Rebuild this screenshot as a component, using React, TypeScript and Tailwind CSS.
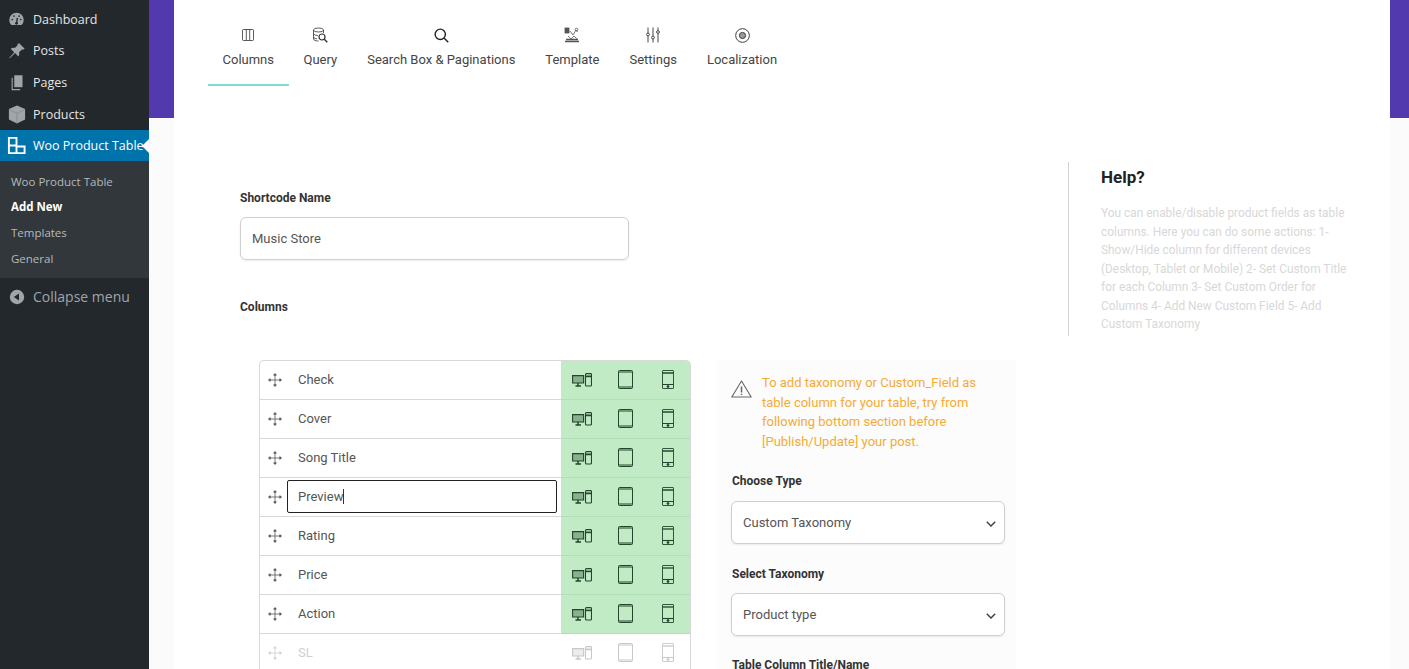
import type { ReactNode } from 'react';

const rows = ['Check', 'Cover', 'Song Title', 'Preview', 'Rating', 'Price', 'Action'];

function DashIcon() {
  return (
    <svg viewBox="0 0 20 20" className="h-[17px] w-[17px] text-[#a0a5aa]" fill="currentColor">
      <path d="M10 2a8.500 8.500 0 0 0-8.500 8.500c0 2.400 1 4.500 2.600 6h11.800a8.500 8.500 0 0 0 2.600-6A8.500 8.500 0 0 0 10 2z" />
      <path d="M10 15l1-7" stroke="#23282d" strokeWidth="1.600" />
      <circle cx="10" cy="14.500" r="1.700" fill="#23282d" />
      <circle cx="5" cy="10" r="1" fill="#23282d" />
      <circle cx="15" cy="10" r="1" fill="#23282d" />
      <circle cx="7" cy="6" r="1" fill="#23282d" />
      <circle cx="13" cy="6" r="1" fill="#23282d" />
    </svg>
  );
}

function PinIcon() {
  return (
    <svg viewBox="0 0 20 20" className="h-[18px] w-[18px] text-[#a0a5aa]" fill="currentColor">
      <path d="M12.500 1.500l6 6-1.600 1.200-1-.6-3.600 3.400c.6 1.700.2 3.300-.8 4.500L7.800 12.300 2 18l-.5-.5 5.400-6-3.900-3.900c1.200-1 2.800-1.400 4.500-.8l3.400-3.600-.6-1z" />
    </svg>
  );
}

function PagesIcon() {
  return (
    <svg viewBox="0 0 20 20" className="h-[17px] w-[15px] text-[#a0a5aa]" fill="currentColor" preserveAspectRatio="none">
      <path d="M7 1.500h11v14H7z" />
      <path d="M5 4.500v13h10v1.500H3.500V4.500z" />
    </svg>
  );
}

function BoxIcon() {
  return (
    <svg viewBox="0 0 20 20" className="h-[19px] w-[18px] text-[#a0a5aa]" preserveAspectRatio="none">
      <path d="M10 .5l9 3.800v11L10 19.500 1 15.300v-11z" fill="currentColor" />
      <path d="M1.500 5L10 8.700 18.500 5M10 8.700v10.500" fill="none" stroke="#7d8287" strokeWidth="0.700" />
    </svg>
  );
}

function WooIcon() {
  return (
    <svg viewBox="0 0 20 20" className="h-[19px] w-[19px] text-white" fill="none" stroke="currentColor" strokeWidth="2">
      <path d="M2 2h8v16H2zM2 10h8M10 11h8.500v7H10" />
    </svg>
  );
}

function CollapseIcon() {
  return (
    <svg viewBox="0 0 20 20" className="h-[16px] w-[16px] text-[#a0a5aa]" fill="currentColor">
      <path fillRule="evenodd" d="M10 1a9 9 0 1 1 0 18 9 9 0 0 1 0-18zm2.500 4.500L6 10l6.500 4.500z" />
    </svg>
  );
}

function MoveIcon() {
  return (
    <svg viewBox="0 0 16 16" className="h-[16px] w-[16px]" fill="none" stroke="currentColor" strokeWidth="0.800">
      <path d="M8 2v12M2 8h12" />
      <path d="M6.700 3.200L8 1.500l1.300 1.700zM6.700 12.800L8 14.500l1.300-1.700zM3.200 6.700L1.500 8l1.700 1.300zM12.800 6.700L14.500 8l-1.700 1.300z" fill="currentColor" />
    </svg>
  );
}

function DesktopMobileIcon() {
  return (
    <svg viewBox="0 0 20 14" className="h-[14px] w-[20px]" fill="none" stroke="currentColor" strokeWidth="1.100">
      <path d="M.6 2.600h11v7.400H.6z" fill="currentColor" fillOpacity="0.350" />
      <path d="M3.500 13h5.500M6 10v2.500" strokeWidth="1.500" />
      <rect x="13.500" y=".6" width="6" height="12.400" rx="1" />
      <path d="M13.500 3.400h6" strokeWidth="1.600" />
    </svg>
  );
}

function TabletIcon() {
  return (
    <svg viewBox="0 0 15 19" className="h-[19px] w-[15px]" fill="none" stroke="currentColor" strokeWidth="1">
      <rect x=".5" y=".5" width="14" height="18" rx="1" />
      <path d="M.5 2h14M.5 17h14" />
    </svg>
  );
}

function PhoneIcon() {
  return (
    <svg viewBox="0 0 12 19" className="h-[19px] w-[12px]" fill="none" stroke="currentColor" strokeWidth="0.900">
      <rect x=".5" y=".5" width="11" height="18" rx=".5" />
      <path d="M.5 3h11" strokeWidth="1.300" />
      <path d="M.5 14.500h11" strokeWidth="1.100" />
      <circle cx="6" cy="16.500" r="1" fill="currentColor" />
    </svg>
  );
}

function ColumnsIcon() {
  return (
    <svg viewBox="0 0 12 12" className="h-[12px] w-[12px]" fill="none" stroke="currentColor" strokeWidth="0.800">
      <rect x=".5" y=".5" width="11" height="11" rx="1" />
      <path d="M4.300 .5v11M7.700 .5v11" />
    </svg>
  );
}

function QueryIcon() {
  return (
    <svg viewBox="0 0 16 16" className="h-[16px] w-[16px]" fill="none" stroke="currentColor" strokeWidth="0.800">
      <ellipse cx="6.500" cy="3" rx="5" ry="2" />
      <path d="M1.500 3v9c0 1 2 2 5 2M11.500 3v3M1.500 6.500c0 1 2 2 4.500 2M1.500 10c0 1 2 1.800 3.500 1.800" />
      <circle cx="10" cy="10" r="3" strokeWidth="1.200" />
      <path d="M12.300 12.300l3 3" strokeWidth="1.400" />
    </svg>
  );
}

function TemplateIcon() {
  return (
    <svg viewBox="0 0 16 16" className="h-[16px] w-[16px] text-[#555]" fill="none" stroke="currentColor" strokeWidth="0.800">
      <rect x="1" y="1" width="4" height="5" fill="currentColor" />
      <path d="M6 4l3 4 3-5 1.500 2M4 9l3 3 3-3 3 3" />
      <circle cx="12.500" cy="2.500" r="1.300" />
      <path d="M1 14.500h14M2 12.500h12" strokeWidth="1.500" />
    </svg>
  );
}

function SlidersIcon() {
  return (
    <svg viewBox="0 0 14 16" className="h-[16px] w-[14px]" fill="none" stroke="currentColor" strokeWidth="0.900">
      <path d="M2 .5v5.500M2 9v6.500M7 .5v8.500M7 12v3.500M12 .5v3M12 6.500v9" />
      <circle cx="2" cy="7.500" r="1.400" />
      <circle cx="7" cy="10.500" r="1.400" />
      <circle cx="12" cy="5" r="1.400" />
    </svg>
  );
}

function TargetIcon() {
  return (
    <svg viewBox="0 0 16 16" className="h-[15px] w-[15px]" fill="none" stroke="currentColor" strokeWidth="1">
      <circle cx="8" cy="8" r="7.300" />
      <circle cx="8" cy="8" r="3.300" fill="currentColor" fillOpacity="0.500" />
    </svg>
  );
}

function SearchIcon() {
  return (
    <svg viewBox="0 0 16 16" className="h-[15px] w-[15px] text-[#222]" fill="none" stroke="currentColor" strokeWidth="1.500">
      <circle cx="6.700" cy="6.700" r="5.500" />
      <path d="M10.700 10.700l4.500 4.500" />
    </svg>
  );
}

function WarnIcon() {
  return (
    <svg viewBox="0 0 21 18" className="h-[18px] w-[21px] text-[#666]" fill="none" stroke="currentColor" strokeWidth="1.100">
      <path d="M10.500 1L.8 17h19.400z" strokeLinejoin="round" />
      <path d="M10.500 6.500v6M10.500 13.800v1.300" strokeWidth="1.500" />
    </svg>
  );
}

function Chevron() {
  return (
    <svg viewBox="0 0 10 6" className="h-[6px] w-[10px] text-[#444]" fill="none" stroke="currentColor" strokeWidth="1.500">
      <path d="M.8 .8L5 5l4.200-4.200" />
    </svg>
  );
}

function MenuItem({ icon, label }: { icon: ReactNode; label: string }) {
  return (
    <div className="flex h-[31.7px] items-center">
      <div className="flex w-[33px] shrink-0 justify-center">{icon}</div>
      <span className="pt-[1.5px] text-[12.5px] text-[#e4e5e6]">{label}</span>
    </div>
  );
}

function Sidebar() {
  return (
    <aside className="flex w-[149px] shrink-0 flex-col bg-[#23282d] font-['Open_Sans',sans-serif]">
      <div className="pt-[3.5px]">
        <MenuItem icon={<DashIcon />} label="Dashboard" />
        <MenuItem icon={<PinIcon />} label="Posts" />
        <MenuItem icon={<PagesIcon />} label="Pages" />
        <MenuItem icon={<BoxIcon />} label="Products" />
      </div>
      <div className="relative flex h-[30.7px] items-center bg-[#0073aa]">
        <div className="flex w-[33px] shrink-0 justify-center"><WooIcon /></div>
        <span className="whitespace-nowrap pt-[2px] text-[12.5px] text-white">Woo Product Table</span>
        <div className="absolute right-0 top-[9px] h-0 w-0 border-y-[7px] border-r-[7px] border-y-transparent border-r-white" />
      </div>
      <div className="flex h-[117px] flex-col justify-center bg-[#32373c] pl-[11px] pt-[1px] text-[11.5px] leading-[25.6px] text-[#b4b9be]">
        <div>Woo Product Table</div>
        <div className="font-bold text-white">Add New</div>
        <div>Templates</div>
        <div>General</div>
      </div>
      <div className="flex h-[38px] items-center">
        <div className="flex w-[33px] shrink-0 justify-center"><CollapseIcon /></div>
        <span className="text-[14px] text-[#a0a5aa]">Collapse menu</span>
      </div>
    </aside>
  );
}

function Tab({ icon, label, active }: { icon: ReactNode; label: string; active?: boolean }) {
  return (
    <div className={active ? 'flex h-[86px] flex-col items-center border-b-2 border-[#7fdbdd] px-[14.5px] pt-[27px]' : 'flex h-[86px] flex-col items-center px-[15px] pt-[27px]'}>
      <div className="flex h-[16px] items-center text-[#333]">{icon}</div>
      <span className="mt-[8px] whitespace-nowrap text-[13px] leading-[18px] text-[#444]">{label}</span>
    </div>
  );
}

function Row({ label, editing, off }: { label: string; editing?: boolean; off?: boolean }) {
  return (
    <div className="flex h-[39px]">
      <div className={off ? 'flex w-[302px] items-center border-b border-[#e3e3e3] pb-[1px]' : 'flex w-[302px] items-center border-b border-[#d8d8d8] pb-[1px]'}>
        <div className={off ? 'flex w-[30px] shrink-0 justify-center text-[#cfcfcf]' : 'flex w-[30px] shrink-0 justify-center text-[#555]'}><MoveIcon /></div>
        {editing ? (
          <div className="ml-[-3px] mr-[4px] flex h-[33px] flex-1 items-center rounded-[2px] border border-[#222] pl-[10px] text-[13px] text-[#555]">
            {label}<span className="h-[15px] w-px bg-[#333]" />
          </div>
        ) : (
          <span className={off ? 'pl-[8px] text-[13px] text-[#cfcfcf]' : 'pl-[8px] text-[13px] text-[#555]'}>{label}</span>
        )}
      </div>
      <div className={off ? 'flex w-[129px] items-center border-b border-[#e3e3e3] pb-[1px] pl-[11px] text-[#c8c8c8]' : 'flex w-[129px] items-center border-b border-[#b4deb9] bg-[#c1ebc5] pb-[1px] pl-[11px] text-[#24452c]'}>
        <DesktopMobileIcon />
        <div className="ml-[26px]"><TabletIcon /></div>
        <div className="ml-[29px]"><PhoneIcon /></div>
      </div>
    </div>
  );
}

function SelectBox({ label }: { label: string }) {
  return (
    <div className="ml-[-1px] flex h-[43px] w-[274px] items-center justify-between rounded-[6px] border border-[#cfcfcf] bg-white pl-[11px] pr-[8px] shadow-[0_1px_2px_rgba(0,0,0,0.08)]">
      <span className="text-[13px] text-[#555]">{label}</span>
      <div className="pt-[3px]"><Chevron /></div>
    </div>
  );
}

export default function App() {
  return (
    <div className="flex h-[669px] w-[1409px] overflow-hidden bg-white font-['Roboto',sans-serif]">
      <Sidebar />
      <div className="flex min-w-0 flex-1 flex-col bg-[#fbfbfb]">
        <div className="flex h-[118px] shrink-0">
          <div className="w-[25px] bg-[#5239ad]" />
          <div className="flex flex-1 bg-white pl-[34px]">
            <Tab active icon={<ColumnsIcon />} label="Columns" />
            <Tab icon={<QueryIcon />} label="Query" />
            <Tab icon={<SearchIcon />} label="Search Box & Paginations" />
            <Tab icon={<TemplateIcon />} label="Template" />
            <Tab icon={<SlidersIcon />} label="Settings" />
            <Tab icon={<TargetIcon />} label="Localization" />
          </div>
          <div className="w-[19px] bg-[#5239ad]" />
        </div>
        <div className="flex min-h-0 flex-1 pl-[25px] pr-[19px]">
          <div className="flex flex-1 bg-white">
            <div className="w-[894px] shrink-0 pl-[66px] pt-[72.5px]">
              <div className="text-[12px] font-bold leading-[15px] text-[#333]">Shortcode Name</div>
              <div className="mt-[11.5px] flex h-[43px] w-[389px] items-center rounded-[6px] border border-[#cfcfcf] pl-[11px] text-[13px] text-[#555] shadow-[0_1px_2px_rgba(0,0,0,0.08)]">Music Store</div>
              <div className="mt-[40px] text-[12px] font-bold leading-[15px] text-[#333]">Columns</div>
              <div className="mt-[45px] flex pl-[19px]">
                <div className="w-[432px] shrink-0 self-start overflow-hidden rounded-t-[5px] border-x border-t border-[#d8d8d8]">
                  {rows.map((r) => (
                    <Row key={r} label={r} editing={r === 'Preview'} />
                  ))}
                  <Row label="SL" off />
                </div>
                <div className="ml-[25px] h-[320px] w-[300px] shrink-0 bg-[#fcfcfc] pl-[16px] pt-[13px]">
                  <div className="flex">
                    <div className="ml-[-6px] w-[36px] shrink-0 pl-[5px] pt-[7px]"><WarnIcon /></div>
                    <p className="w-[235px] text-[13px] leading-[19.5px] text-[#f5ab35]">
                      To add taxonomy or Custom_Field as table column for your table, try from following bottom section before [Publish/Update] your post.
                    </p>
                  </div>
                  <div className="mt-[23px] text-[12px] font-bold leading-[15px] text-[#333]">Choose Type</div>
                  <div className="mt-[12px]"><SelectBox label="Custom Taxonomy" /></div>
                  <div className="mt-[23px] text-[12px] font-bold leading-[15px] text-[#333]">Select Taxonomy</div>
                  <div className="mt-[11px]"><SelectBox label="Product type" /></div>
                  <div className="mt-[22px] text-[12px] font-bold leading-[15px] text-[#333]">Table Column Title/Name</div>
                </div>
              </div>
            </div>
            <div className="mt-[44px] h-[174px] w-[290px] border-l border-[#d5d5d5] pl-[32px]">
              <div className="text-[17px] font-bold leading-[30px] text-[#222]">Help?</div>
              <p className="mt-[12px] w-[255px] text-[11.9px] leading-[18.5px] text-[#d8d8d8]">
                You can enable/disable product fields as table columns. Here you can do some actions: 1- Show/Hide column for different devices (Desktop, Tablet or Mobile) 2- Set Custom Title for each Column 3- Set Custom Order for Columns 4- Add New Custom Field 5- Add Custom Taxonomy
              </p>
            </div>
          </div>
        </div>
      </div>
    </div>
  );
}
